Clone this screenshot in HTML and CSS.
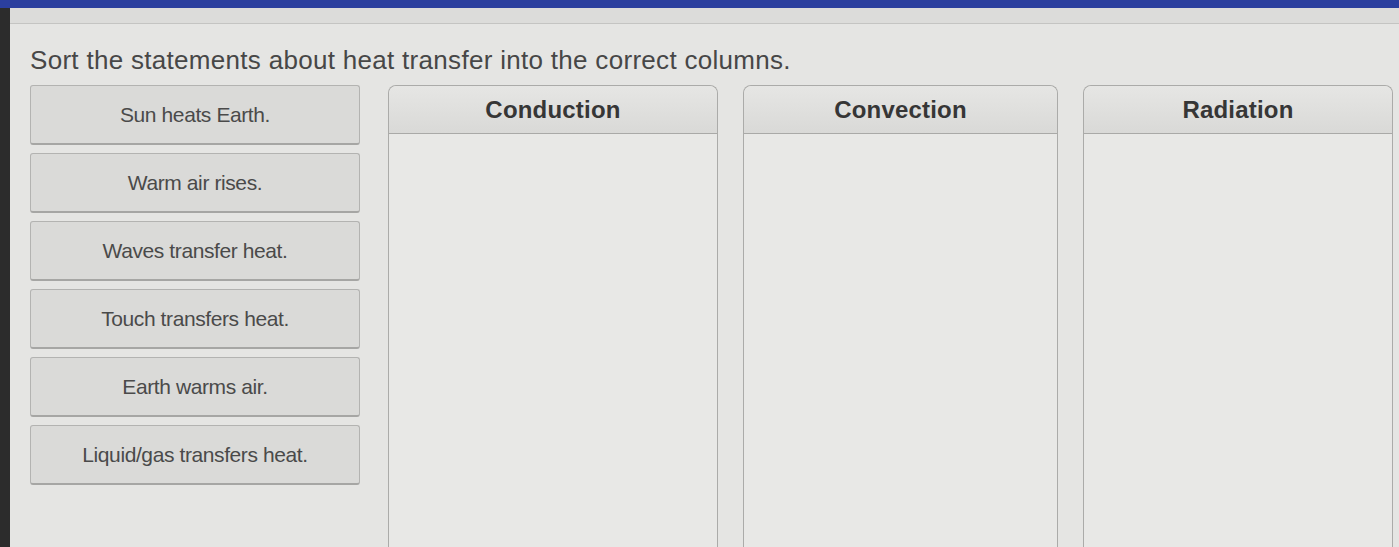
FILE: index.html
```html
<!DOCTYPE html>
<html lang="en">
<head>
    <meta charset="UTF-8">
    <meta name="viewport" content="width=device-width, initial-scale=1.0">
    <title>Heat Transfer Sort</title>
    <link rel="stylesheet" href="styles.css">
</head>
<body>
    <div class="topbar"></div>
    <div class="page">
        <div class="toolstrip"></div>
        <div class="question">
            <p class="prompt">Sort the statements about heat transfer into the correct columns.</p>

            <div class="board">
                <ul class="bank">
                    <li class="tile">Sun heats Earth.</li>
                    <li class="tile">Warm air rises.</li>
                    <li class="tile">Waves transfer heat.</li>
                    <li class="tile">Touch transfers heat.</li>
                    <li class="tile">Earth warms air.</li>
                    <li class="tile">Liquid/gas transfers heat.</li>
                </ul>

                <div class="bin">
                    <div class="bin-head">Conduction</div>
                    <div class="bin-body"></div>
                </div>
                <div class="bin">
                    <div class="bin-head">Convection</div>
                    <div class="bin-body"></div>
                </div>
                <div class="bin">
                    <div class="bin-head">Radiation</div>
                    <div class="bin-body"></div>
                </div>
            </div>
        </div>
    </div>
</body>
</html>
```

FILE: styles.css
```css
body {
    margin: 0;
    height: 547px;
    overflow: hidden;
    font-family: "Liberation Sans", Arial, sans-serif;
    background-color: #e5e5e3;
    color: #444;
}
.topbar {
    height: 8px;
    background-color: #2b3f9e;
}
.page {
    border-left: 10px solid #2c2c2c;
    height: 539px;
}
.toolstrip {
    height: 15px;
    background-color: #dcdcda;
    border-bottom: 1px solid #c4c4c2;
}
.question {
    padding: 0 6px 0 20px;
}
.prompt {
    margin: 21px 0 9px;
    font-size: 26px;
    letter-spacing: 0.3px;
    color: #474747;
}
.board {
    display: grid;
    grid-template-columns: 333px 330px 315px 1fr;
    column-gap: 25px;
    align-items: start;
}
.bank {
    list-style: none;
    margin: 0 3px 0 0;
    padding: 0;
    display: flex;
    flex-direction: column;
    gap: 8px;
}
.tile {
    height: 57px;
    display: flex;
    align-items: center;
    justify-content: center;
    background-color: #dadad8;
    border: 1px solid #b3b3b1;
    border-bottom: 2px solid #a6a6a4;
    border-radius: 3px;
    font-size: 21px;
    letter-spacing: -0.4px;
    color: #4a4a4a;
}
.bin {
    height: 470px;
    border: 1px solid #ababa9;
    border-bottom: none;
    border-radius: 8px 8px 0 0;
    background-color: #e8e8e6;
    display: flex;
    flex-direction: column;
}
.bin-head {
    height: 47px;
    display: flex;
    align-items: center;
    justify-content: center;
    background: linear-gradient(#e6e6e4, #d9d9d7);
    border-bottom: 1px solid #a9a9a7;
    border-radius: 8px 8px 0 0;
    font-size: 24px;
    font-weight: bold;
    letter-spacing: 0.2px;
    color: #363636;
}
.bin-body {
    flex: 1;
}
```
